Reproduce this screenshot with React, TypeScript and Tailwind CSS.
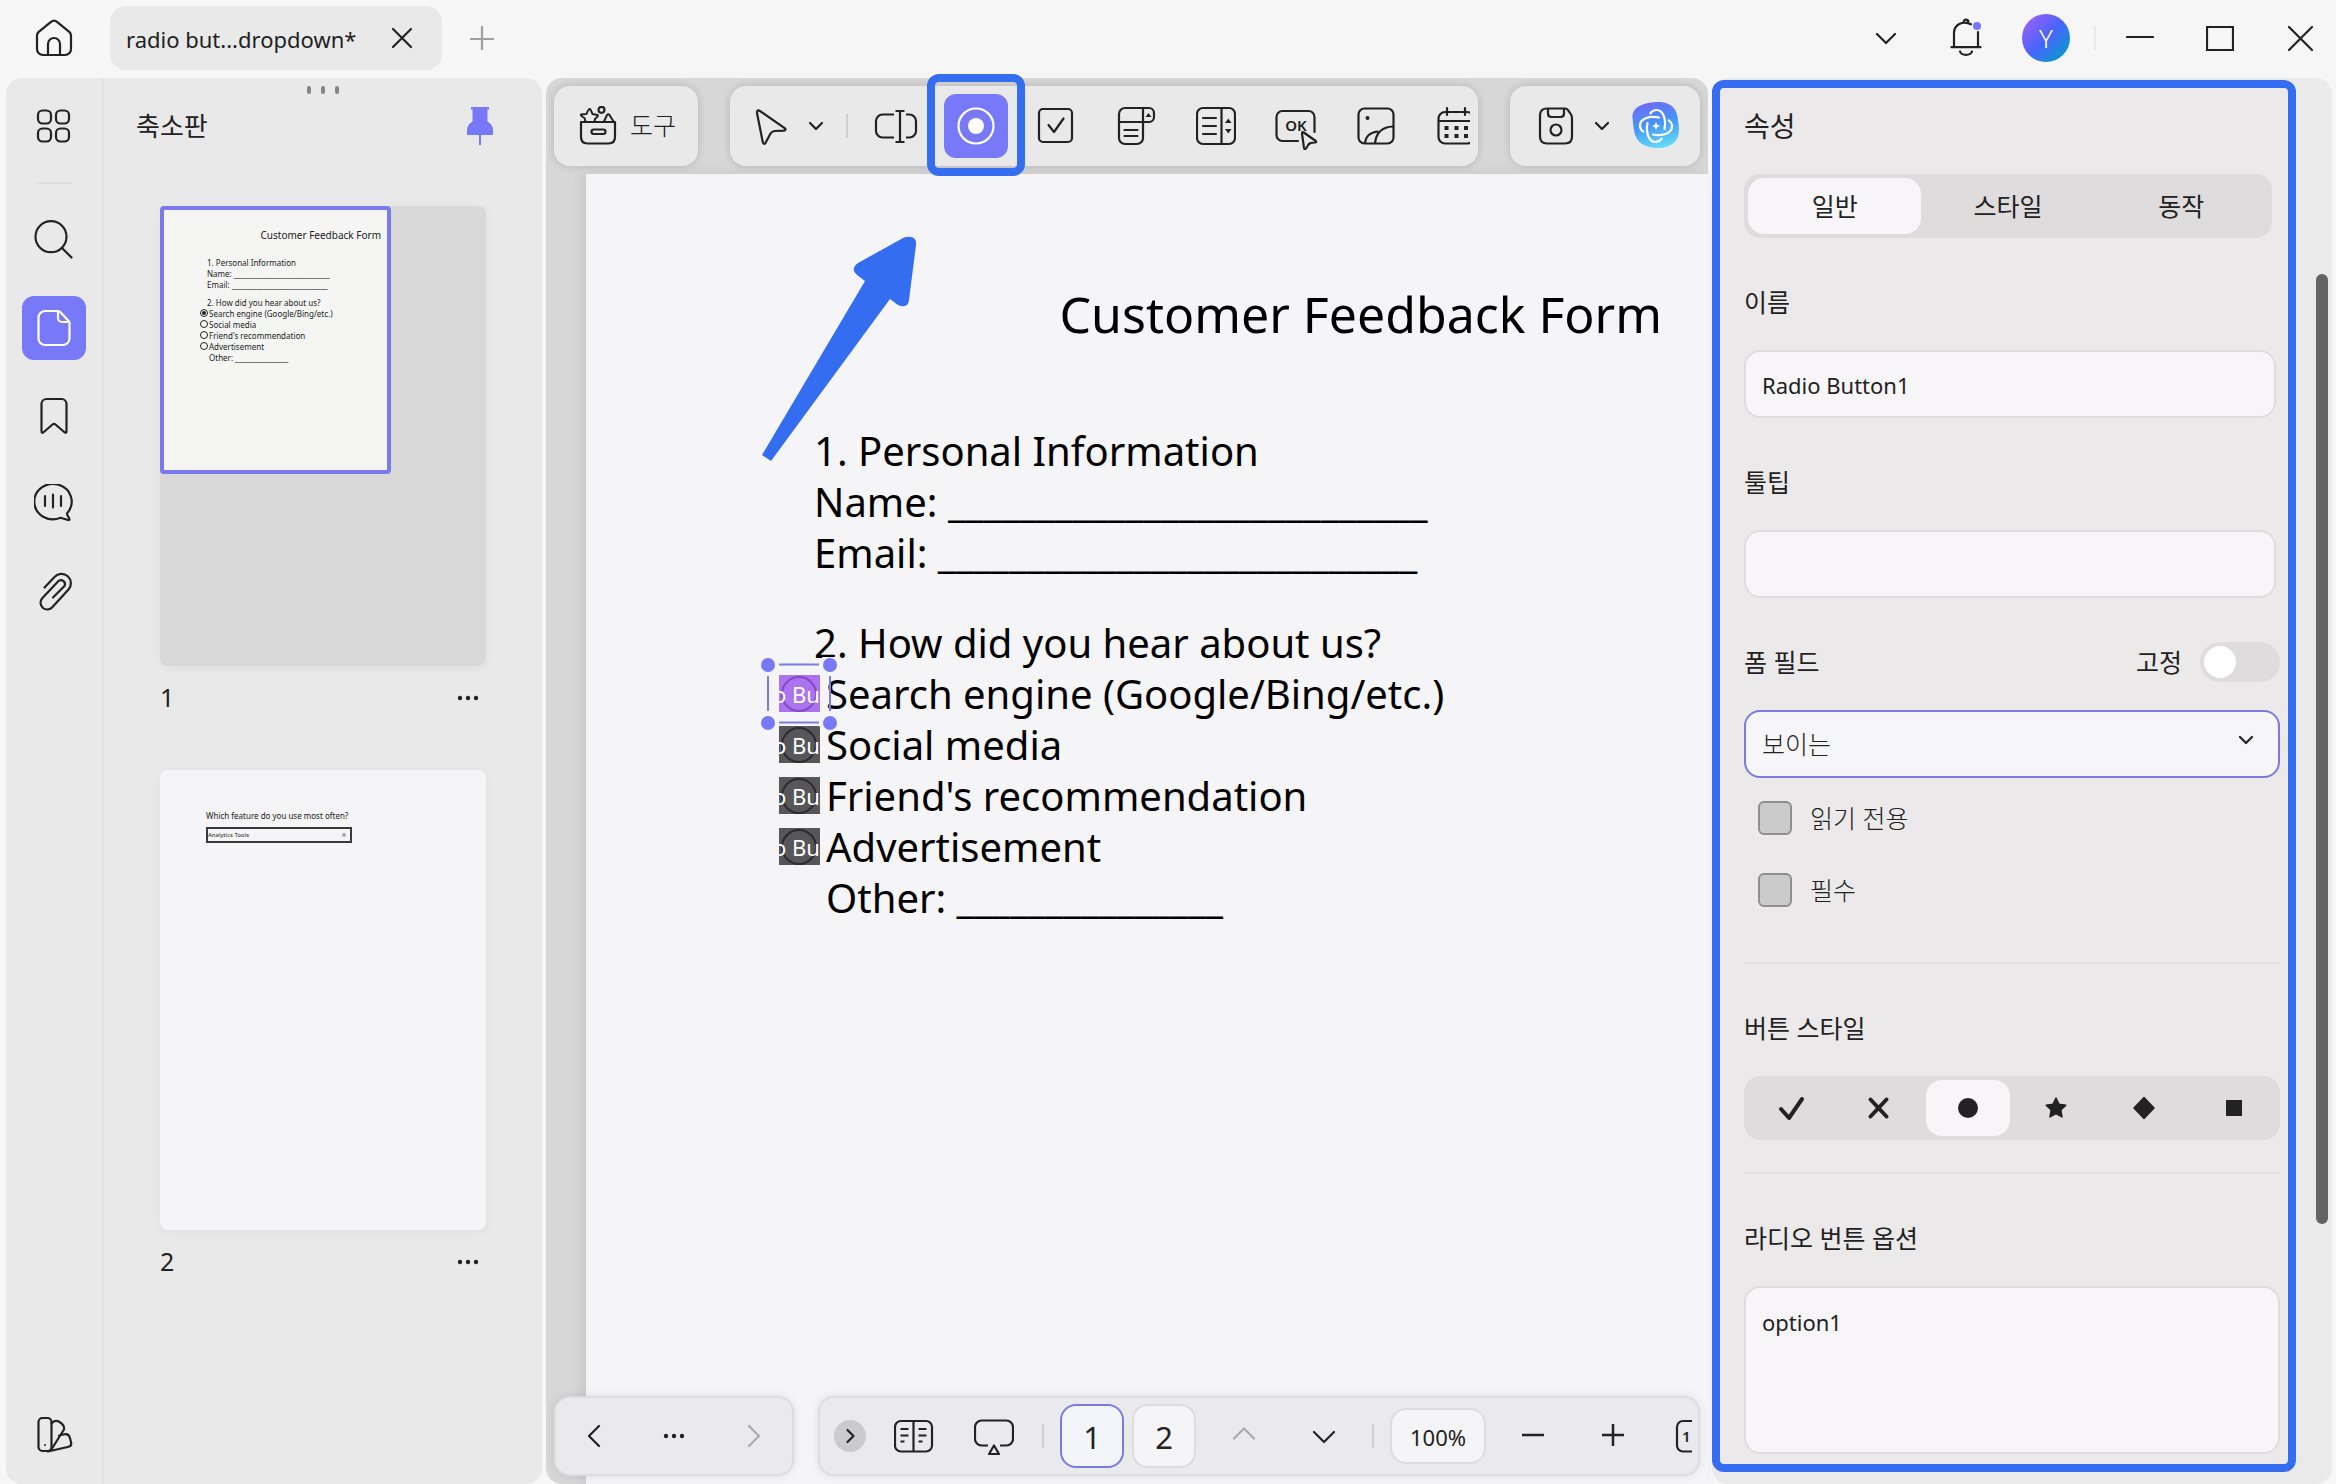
import React from "react";

const FONT = "font-['Noto_Sans','Noto_Sans_CJK_KR',sans-serif]";

type IconProps = { children: React.ReactNode; className?: string; w?: number; h?: number };

function Icon({ children, className = "", w = 40, h = 40 }: IconProps) {
  return (
    <svg
      width={w}
      height={h}
      viewBox={`0 0 ${w} ${h}`}
      fill="none"
      stroke="currentColor"
      strokeWidth="2.2"
      strokeLinecap="round"
      strokeLinejoin="round"
      className={`shrink-0 ${className}`}
      aria-hidden="true"
    >
      {children}
    </svg>
  );
}

function Tool({ label, children, className = "" }: { label: string; children: React.ReactNode; className?: string }) {
  return (
    <button aria-label={label} className={`relative flex h-16 w-16 shrink-0 items-center justify-center rounded-xl ${className}`}>
      {children}
    </button>
  );
}

const Dots = () => (
  <Icon w={24} h={8}>
    <g fill="currentColor" stroke="none">
      <circle cx="4" cy="4" r="2.2" />
      <circle cx="12" cy="4" r="2.2" />
      <circle cx="20" cy="4" r="2.2" />
    </g>
  </Icon>
);

const SmallChevron = () => (
  <Icon w={20} h={20}>
    <path d="M4 7l6 6 6-6" />
  </Icon>
);

function Header() {
  return (
    <header className="flex h-[78px] shrink-0 items-center pb-0.5 pl-[22px] pr-1">
      <Tool label="Home">
        <Icon>
          <path d="M3 17.5c0-1.5.6-2.6 1.7-3.6L17 3.8c1.8-1.5 4.2-1.5 6 0l12.3 10.1c1.1 1 1.7 2.1 1.7 3.6V31a6 6 0 0 1-6 6H9a6 6 0 0 1-6-6zM14 37V26a6 6 0 0 1 12 0v11" />
        </Icon>
      </Tool>
      <div className="ml-6 flex h-16 w-[332px] items-center justify-between rounded-2xl bg-[#e9e9e9] pl-4 pr-7">
        <span className="whitespace-nowrap pt-0.5 text-[22px]">radio but...dropdown*</span>
        <button aria-label="Close tab">
          <Icon w={24} h={24}>
            <path d="M3 3l18 18M21 3L3 21" />
          </Icon>
        </button>
      </div>
      <Tool label="New tab" className="ml-2 text-[#a0a0a0]">
        <Icon w={24} h={24}>
          <path d="M12 1v23M0 13h24" />
        </Icon>
      </Tool>
      <div className="ml-auto flex items-center">
        <Tool label="More">
          <Icon w={24} h={24}>
            <path d="M3 8l9 9 9-9" />
          </Icon>
        </Tool>
        <Tool label="Notifications" className="ml-4">
          <Icon>
            <path d="M17.5 5c0-4.5 5-4.5 5 0M25 6.3C16.5 2 8 7 8 15v14M32 14v15M5.500 29.200h29M14 33.500c1.500 4.500 10.500 4.500 12 0" />
            <circle cx="31" cy="8" r="4" fill="#7879f9" stroke="none" />
          </Icon>
        </Tool>
        <button className="ml-6 flex h-12 w-12 items-center justify-center rounded-full bg-linear-[135deg,#9a63f5_8%,#4a63ff_50%,#00a3c4_95%] text-[26px] font-light text-white">
          Y
        </button>
        <div className="ml-6 h-6 w-0.5 bg-[#e9e9e9]" />
        <Tool label="Minimize" className="ml-3">
          <Icon w={28} h={28}>
            <path d="M1 13h26" />
          </Icon>
        </Tool>
        <Tool label="Maximize" className="ml-4">
          <Icon w={28} h={28}>
            <path d="M1 3h26v23H1z" strokeLinejoin="miter" />
          </Icon>
        </Tool>
        <Tool label="Close" className="ml-4">
          <Icon w={28} h={28}>
            <path d="M3 3l23 23M26 3L3 26" />
          </Icon>
        </Tool>
      </div>
    </header>
  );
}

function Rail() {
  return (
    <nav className="flex w-[98px] shrink-0 flex-col items-center gap-6 border-r-2 border-[#e1e1e1] pb-[18px] pt-4">
      <Tool label="Apps">
        <Icon>
          <rect x="4" y="4.500" width="13" height="13" rx="4.500" />
          <rect x="22" y="4.500" width="13" height="13" rx="4.500" />
          <rect x="4" y="22.500" width="13" height="13" rx="4.500" />
          <rect x="22" y="22.500" width="13" height="13" rx="4.500" />
        </Icon>
      </Tool>
      <div className="h-0.5 w-9 bg-[#dfdfdf]" />
      <Tool label="Search">
        <Icon>
          <circle cx="17" cy="16.700" r="15.500" />
          <path d="M28 28l9.500 9.500" />
        </Icon>
      </Tool>
      <Tool label="Thumbnails" className="bg-[#7879f9] text-white">
        <Icon>
          <path d="M24 3H11a6.500 6.500 0 0 0-6.500 6.500v21A6.500 6.500 0 0 0 11 37h18a6.500 6.500 0 0 0 6.500-6.500V14L26.500 4.200Q25.500 3 24 3v7a4 4 0 0 0 4 4h7.500" />
        </Icon>
      </Tool>
      <Tool label="Bookmarks">
        <Icon>
          <path d="M7.500 8a5 5 0 0 1 5-5h15a5 5 0 0 1 5 5v27q0 3-2.300 1l-8.700-7.500q-1.500-1.300-3 0L9.800 36q-2.300 2-2.300-1z" />
        </Icon>
      </Tool>
      <Tool label="Comments">
        <Icon>
          <path d="M33.700 28.500A18.700 17.700 0 1 0 26.500 33.800L34 36q1.800.3 1.300-1.500l-2-3.500q-.6-1.200.4-2.500zM11 12v10M19 10.500v13M27 12v10" />
        </Icon>
      </Tool>
      <Tool label="Attachments">
        <Icon>
          <path d="M10.500 15.500L20.500 5A9 9 0 0 1 34.500 17.500L18.500 35A6.600 6.600 0 0 1 8 26.500L24.500 9A4 4 0 0 1 30.500 14L19 25.500" />
        </Icon>
      </Tool>
      <Tool label="Themes" className="mt-auto">
        <Icon>
          <rect x="4.500" y="4" width="13" height="33" rx="4" />
          <path d="M17.500 9.500q3.500-4.500 8-1.500 5.500 3.500 4.500 7.500L18 34.500M25 21.500l5.500-1.200q4-.8 5.300 3.200l1.300 5q.8 3.500-2.400 4.300L14 37.500" />
          <circle cx="11" cy="31" r="1" fill="currentColor" stroke="none" />
        </Icon>
      </Tool>
    </nav>
  );
}

function MiniRow({ children, checked }: { children: React.ReactNode; checked?: boolean }) {
  return (
    <div className="relative pl-[2px]">
      <span className="absolute -left-[7px] top-[1px] flex h-2 w-2 items-center justify-center rounded-full border border-[#222]">
        {checked && <span className="h-1 w-1 rounded-full bg-[#222]" />}
      </span>
      {children}
    </div>
  );
}

function ThumbFooter({ n }: { n: number }) {
  return (
    <div className="flex h-8 items-center justify-between pr-1.5 text-[25px]">
      <span>{n}</span>
      <button aria-label={`Page ${n} options`}>
        <Dots />
      </button>
    </div>
  );
}

function Thumbnails() {
  return (
    <aside className="flex min-w-0 flex-1 flex-col">
      <div className="flex justify-center gap-2.5 pt-2">
        <span className="h-2 w-1 rounded-sm bg-[#858585]" />
        <span className="h-2 w-1 rounded-sm bg-[#858585]" />
        <span className="h-2 w-1 rounded-sm bg-[#858585]" />
      </div>
      <div className="flex h-16 items-center justify-between pl-8 pr-[42px]">
        <h2 className="text-[26px]">축소판</h2>
        <button aria-label="Pin panel" className="text-[#7879f9]">
          <Icon w={40} h={40}>
            <path
              d="M11 1h18v2.500h-1.500v12q5.500 3 5.500 9V29H21v10h-2V29H7v-4.500q0-6 5.500-9v-12H11z"
              fill="currentColor"
              stroke="none"
            />
          </Icon>
        </button>
      </div>
      <div className="flex flex-col px-14 pt-12">
        <div className="h-[460px] rounded-lg bg-[#d9d8d9] shadow-[0_2px_10px_rgba(0,0,0,0.05)]">
          <div className="h-[268px] w-[231px] rounded border-4 border-[#7a7aee] bg-[#f5f5f4] text-[8px] leading-[11px] text-[#222]">
            <div className="pr-1.5 pt-[17px] text-right text-[10px] leading-4">Customer Feedback Form</div>
            <div className="whitespace-nowrap pl-[43px] pt-[14px]">
              <div>1. Personal Information</div>
              <div>Name: ___________________________</div>
              <div>Email: ___________________________</div>
              <div className="pt-[7px]">2. How did you hear about us?</div>
              <MiniRow checked>Search engine (Google/Bing/etc.)</MiniRow>
              <MiniRow>Social media</MiniRow>
              <MiniRow>Friend's recommendation</MiniRow>
              <MiniRow>Advertisement</MiniRow>
              <div className="pl-[2px]">Other: _______________</div>
            </div>
          </div>
        </div>
        <div className="mt-4">
          <ThumbFooter n={1} />
        </div>
        <div className="mt-14 h-[460px] rounded-lg bg-[#f5f4f6] pl-[46px] pt-[38px] text-[8px] leading-4 text-[#222] shadow-[0_2px_10px_rgba(0,0,0,0.05)]">
          <div>Which feature do you use most often?</div>
          <div className="mt-[3px] flex h-4 w-[146px] items-center justify-between border-2 border-[#3a383a] pr-1 text-[6px]">
            <span>Analytics Tools</span>
            <span className="h-1 w-1 rounded-full bg-[#aaa]" />
          </div>
        </div>
        <div className="mt-4">
          <ThumbFooter n={2} />
        </div>
      </div>
    </aside>
  );
}

const CARD = "flex h-20 items-center rounded-2xl bg-[#e9e9e9] shadow-[0_0_8px_rgba(0,0,0,0.16)]";

function Toolbar() {
  return (
    <div className="relative z-10 flex h-24 shrink-0 items-start justify-between px-2 pt-2">
      <button className={`${CARD} gap-3 pl-6 pr-[22px]`}>
        <Icon>
          <path d="M3 16h34v15q0 6.500-6.500 6.500h-21Q3 37.500 3 31z" />
          <rect x="13.500" y="23.500" width="14" height="4.500" rx="2.200" />
          <circle cx="23.500" cy="3.800" r="3" />
          <path d="M7.500 15.500L6.500 12Q2 9.500 3 8.500L8.500 8Q10.500 2.500 12 3q.5 0 2.500 5L19.500 9q1.500.6-2.500 4l-.5 2.500M26 15.500l3-6.500q1.200-1.500 2.500 0l4 6.500" strokeWidth="2" />
        </Icon>
        <span className="text-[25px] font-light">도구</span>
      </button>
      <div className={`${CARD} px-2`}>
        <Tool label="Select">
          <Icon>
            <path d="M7 7q-.2-4 3-2l25 17.300q1.500 1.600-1 2.300l-9.500.4q-2.500.3-4 2.500l-5 9.500q-1.800 2-2.700-.8z" />
          </Icon>
        </Tool>
        <button aria-label="Select options" className="flex w-7 justify-center">
          <SmallChevron />
        </button>
        <div className="mx-4 h-6 w-0.5 bg-[#cfcfcf]" />
        <div className="flex gap-4">
          <Tool label="Text field">
            <Icon w={44}>
              <path d="M20 8.500H8.500a6.500 6.500 0 0 0-6.500 6.500v10a6.500 6.500 0 0 0 6.500 6.500H20M32 8.500h3.500a6.500 6.500 0 0 1 6.500 6.500v10a6.500 6.500 0 0 1-6.500 6.500H32M26 5v31M21.500 5h9M21.500 36h9" strokeLinecap="butt" />
            </Icon>
          </Tool>
          <Tool label="Radio button" className="bg-[#7879f9] text-white">
            <Icon>
              <circle cx="20" cy="20" r="17.500" />
              <circle cx="20" cy="20" r="8" fill="currentColor" stroke="none" />
            </Icon>
            <span className="pointer-events-none absolute -inset-x-[17px] -bottom-[18px] -top-5 rounded-xl border-8 border-[#346df0]" />
          </Tool>
          <Tool label="Check box">
            <Icon>
              <rect x="3" y="3" width="33" height="33" rx="4" />
              <path d="M12.500 19l5.500 7 9.500-13.500" />
            </Icon>
          </Tool>
          <Tool label="Combo box">
            <Icon>
              <path d="M27 16H3V8a6 6 0 0 1 6-6h24a5 5 0 0 1 5 5v4a5 5 0 0 1-5 5h-6V2M3 16v16a6 6 0 0 0 6 6h12a6 6 0 0 0 6-6V16M8.500 24h13M8.500 30h13" />
              <path d="M29.500 11h6l-3-4z" fill="currentColor" stroke="none" />
            </Icon>
          </Tool>
          <Tool label="List box">
            <Icon>
              <rect x="1" y="2" width="38" height="36" rx="6" />
              <path d="M25.500 2v36M7 12h13M7 20h13M7 28h13" />
              <path d="M29 17h6.500l-3.200-4.500zM29 23h6.500l-3.200 4.500z" fill="currentColor" stroke="none" />
            </Icon>
          </Tool>
          <Tool label="Push button">
            <Icon w={44} h={48}>
              <path d="M24 39H8.500A6 6 0 0 1 2.500 33V15a6 6 0 0 1 6-6h26a6 6 0 0 1 6 6v15" />
              <text x="22" y="28.500" textAnchor="middle" fontSize="15" fontWeight="600" fill="currentColor" stroke="none">
                OK
              </text>
              <path d="M28 31.500q0-2 1.800-1l12 8.500q1 1.200-.8 1.500l-4.500.5-2 1.500-2.500 4q-1.500 1.500-2-.5z" fill="#e9e9e9" />
            </Icon>
          </Tool>
          <Tool label="Image">
            <Icon>
              <rect x="2.500" y="2.500" width="35" height="35" rx="6" />
              <path d="M9 37q1-10 12.500-11.500M19 37q2-16 18-16.500" />
              <circle cx="11.500" cy="12" r="2" fill="currentColor" stroke="none" />
            </Icon>
          </Tool>
          <button aria-label="Date" className="flex h-16 w-[46px] shrink-0 items-center overflow-hidden pl-3">
            <Icon>
              <path d="M9 6h22a6.500 6.500 0 0 1 6.500 6.500V31a6.500 6.500 0 0 1-6.500 6.500H9A6.500 6.500 0 0 1 2.500 31V12.500A6.500 6.500 0 0 1 9 6zM2.500 15h35M11 2v7M29 2v7" />
              <path d="M8.500 20h4v4h-4zM18.500 20h4v4h-4zM28 20h4v4h-4zM8.500 28h4v4h-4zM18.500 28h4v4h-4zM28 28h4v4h-4z" fill="currentColor" stroke="none" />
            </Icon>
          </button>
        </div>
      </div>
      <div className={`${CARD} pl-3.5 pr-3`}>
        <Tool label="Save">
          <Icon>
            <path d="M11 2.500h18q2 0 3.200 1.800L35 8.500q1 1.600 1 3.500v18.500q0 7-7 7H11q-7 0-7-7v-21q0-7 7-7z" />
            <path d="M12 3v4.500q0 3.500 3.500 3.500h9q3.500 0 3.500-3.500V3" />
            <circle cx="20" cy="24" r="5.500" />
          </Icon>
        </Tool>
        <button aria-label="Save options" className="mr-2 flex w-7 justify-center">
          <SmallChevron />
        </button>
        <Tool label="AI assistant">
          <Icon w={52} h={52}>
            <defs>
              <linearGradient id="ai" x1="0.300" y1="0" x2="0.550" y2="1">
                <stop offset="0" stopColor="#6f6af8" />
                <stop offset="0.500" stopColor="#4596fb" />
                <stop offset="1" stopColor="#62dcf4" />
              </linearGradient>
            </defs>
            <path d="M26 2C38 1 46 6 47.500 17 50 30 50 38 43 43.500 36 49 22 50 12 44 3 38 4 28 2.500 18 1.500 7 14 2.500 26 2z" fill="url(#ai)" stroke="none" />
            <g stroke="#fff" strokeWidth="2.200">
              <path id="arc" d="M20.300 13.300Q22.500 10 26.500 10C33 10 36.500 19 34.500 29" />
              <path transform="rotate(90 26 26)" d="M20.300 13.300Q22.500 10 26.500 10C33 10 36.500 19 34.500 29" />
              <path transform="rotate(180 26 26)" d="M20.300 13.300Q22.500 10 26.500 10C33 10 36.500 19 34.500 29" />
              <path transform="rotate(270 26 26)" d="M20.300 13.300Q22.500 10 26.500 10C33 10 36.500 19 34.500 29" />
            </g>
            <path d="M26 22l1.200 2.800 2.800 1.200-2.800 1.200L26 30l-1.200-2.800L22 26l2.800-1.200z" fill="#fff" stroke="none" />
          </Icon>
        </Tool>
      </div>
    </div>
  );
}

function RadioField({ selected }: { selected?: boolean }) {
  return (
    <span
      className={`absolute -left-[47px] top-[7px] flex h-[37px] w-[41px] items-center justify-center ${
        selected ? "bg-[#ab74ee]" : "bg-[#575658]"
      }`}
    >
      <span className="absolute inset-0 flex items-center overflow-hidden">
        <span className={`absolute left-0.5 h-9 w-9 rounded-full border-2 ${selected ? "border-[#8347c8]" : "border-[#2c2b2d]"}`} />
        <span className="relative -ml-1.5 shrink-0 whitespace-nowrap text-[22px] leading-8 text-white">o But</span>
      </span>
      {selected && (
        <svg width="78" height="74" viewBox="0 0 78 74" className="absolute -left-[19px] -top-[18px] z-10 max-w-none" aria-hidden="true">
          <g fill="#f5f4f6">
            <circle cx="8" cy="8" r="11" />
            <circle cx="70" cy="8" r="11" />
            <circle cx="8" cy="66" r="11" />
            <circle cx="70" cy="66" r="11" />
          </g>
          <path d="M19 7.500h40M19 65.500h40M8 19v35M70 19v35" stroke="#7b7de2" strokeWidth="2" />
          <g fill="#7879f9">
            <circle cx="8" cy="8" r="7" />
            <circle cx="70" cy="8" r="7" />
            <circle cx="8" cy="66" r="7" />
            <circle cx="70" cy="66" r="7" />
          </g>
        </svg>
      )}
    </span>
  );
}

function OptionRow({ children, selected }: { children: React.ReactNode; selected?: boolean }) {
  return (
    <div className={`relative ml-3 w-fit ${selected ? "z-10" : ""}`}>
      <RadioField selected={selected} />
      {children}
    </div>
  );
}

function Page() {
  return (
    <article className="relative ml-10 flex-1 bg-[#f5f4f6] text-black shadow-[-4px_0_12px_rgba(0,0,0,0.08)]">
      <h1 className="pr-[46px] pt-[104px] text-right text-[50px] leading-[72px]">Customer Feedback Form</h1>
      <div className="whitespace-nowrap pl-[228px] pt-[75px] text-[40px] leading-[51px]">
        <div>1. Personal Information</div>
        <div>Name: ___________________________</div>
        <div>Email: ___________________________</div>
        <div className="mt-[39px]">2. How did you hear about us?</div>
        <OptionRow selected>Search engine (Google/Bing/etc.)</OptionRow>
        <OptionRow>Social media</OptionRow>
        <OptionRow>Friend's recommendation</OptionRow>
        <OptionRow>Advertisement</OptionRow>
        <div className="ml-3">Other: _______________</div>
      </div>
      <svg width="156" height="226" viewBox="0 0 156 226" className="absolute left-[175px] top-[62px]" aria-hidden="true">
        <path
          d="M1 219L104 45 96 39Q89 33 97 27L143 1.500Q156-2 155 9L148 64Q147 73 137 69L129 63 10 225z"
          fill="#346df0"
        />
      </svg>
    </article>
  );
}

function BottomBar() {
  const card = "flex h-20 items-center rounded-2xl border-2 border-[#dedcdf] bg-[#eae9eb] shadow-[0_0_8px_rgba(0,0,0,0.1)]";
  return (
    <div className="absolute inset-x-2 bottom-2 flex justify-between">
      <div className={`${card} w-60 justify-around`}>
        <Tool label="Previous view">
          <Icon w={24} h={24}>
            <path d="M16 2L6 12l10 10" />
          </Icon>
        </Tool>
        <Tool label="View history">
          <Dots />
        </Tool>
        <Tool label="Next view" className="text-[#aaaaaa]">
          <Icon w={24} h={24}>
            <path d="M8 2l10 10L8 22" />
          </Icon>
        </Tool>
      </div>
      <div className={`${card} gap-4 pl-3.5 pr-1.5`}>
        <button aria-label="Expand" className="flex h-8 w-8 items-center justify-center rounded-full bg-[#cbcacc]">
          <Icon w={20} h={20}>
            <path d="M7.500 4l6 6-6 6" />
          </Icon>
        </button>
        <Tool label="Reading view">
          <Icon>
            <rect x="1" y="5" width="37" height="30.500" rx="6" />
            <path d="M19.500 5v30.500M6.500 13h8M6.500 19.500h8M6.500 25.500h4M24.500 13h8M24.500 19.500h8M24.500 25.500h4" strokeLinecap="butt" />
          </Icon>
        </Tool>
        <Tool label="Presentation">
          <Icon>
            <path d="M14 29.500H7.500a6.500 6.500 0 0 1-6.500-6.500V11a6.500 6.500 0 0 1 6.500-6.500h25A6.500 6.500 0 0 1 39 11v12a6.500 6.500 0 0 1-6.500 6.500H26" strokeLinecap="butt" />
            <path d="M20 29.500l5 8.500H15z" />
          </Icon>
        </Tool>
        <div className="h-6 w-0.5 bg-[#cfcfcf]" />
        <div className="flex gap-2 text-[31px]">
          <button className="h-16 w-16 rounded-2xl border-2 border-[#7b7bdf] bg-[#f4f5fa] pt-0.5">1</button>
          <button className="h-16 w-16 rounded-2xl border-2 border-[#dedcdf] bg-[#f5f4f6] pt-0.5">2</button>
        </div>
        <Tool label="Previous page" className="text-[#aaaaaa]">
          <Icon w={24} h={24}>
            <path d="M2 14.500l10-10 10 10" />
          </Icon>
        </Tool>
        <Tool label="Next page">
          <Icon w={24} h={24}>
            <path d="M2 8l10 10L22 8" />
          </Icon>
        </Tool>
        <div className="h-6 w-0.5 bg-[#cfcfcf]" />
        <button className="h-14 w-24 rounded-2xl border-2 border-[#dedcdf] bg-[#f5f4f6] pt-0.5 text-[22px]">100%</button>
        <Tool label="Zoom out">
          <Icon w={24} h={24}>
            <path d="M0 11h22" strokeLinecap="butt" strokeWidth="2.500" />
          </Icon>
        </Tool>
        <Tool label="Zoom in">
          <Icon w={24} h={24}>
            <path d="M0 11h22M11 0v22" strokeLinecap="butt" strokeWidth="2.500" />
          </Icon>
        </Tool>
        <button aria-label="Actual size" className="flex h-16 w-[30px] shrink-0 items-center overflow-hidden pl-3">
          <Icon>
            <rect x="3" y="5" width="34" height="30.500" rx="6" />
            <text x="8" y="26" fontSize="15" fontWeight="600" fill="currentColor" stroke="none">
              1
            </text>
          </Icon>
        </button>
      </div>
    </div>
  );
}

function CheckRow({ label }: { label: string }) {
  return (
    <label className="flex items-center gap-[18px] pl-3.5 text-[25px] leading-9 font-light">
      <input type="checkbox" className="h-[34px] w-[34px] appearance-none rounded-md border-2 border-[#8f8e90] bg-[#cccbcc]" />
      {label}
    </label>
  );
}

const MARKS: { name: string; shape: React.ReactNode }[] = [
  { name: "Check", shape: <path d="M3 15l8 9L24 5" strokeWidth="4" /> },
  { name: "Cross", shape: <path d="M4.500 5.500l16 17M20.500 5.500l-16 17" strokeWidth="4" /> },
  { name: "Circle", shape: <circle cx="14" cy="14" r="10" fill="currentColor" stroke="none" /> },
  {
    name: "Star",
    shape: <path d="M14 4l3 6.300 6.800.9-5 4.800 1.200 6.900L14 19.700l-6 3.200L9.200 16l-5-4.800 6.800-.9z" fill="currentColor" strokeWidth="1.500" />,
  },
  { name: "Diamond", shape: <path d="M14 3.500L24 14 14 24.500 4 14z" fill="currentColor" strokeWidth="1.500" /> },
  { name: "Square", shape: <path d="M8 6h16v16H8z" fill="currentColor" stroke="none" /> },
];

function Properties() {
  const field = "block rounded-2xl border-2 border-[#dedcdd] bg-[#f7f5f7] px-4 text-[22px] outline-none";
  return (
    <aside className="flex w-[620px] shrink-0 rounded-2xl bg-[#eaeaea]">
      <div className="mb-3 mt-0.5 flex w-[584px] flex-col overflow-hidden rounded-xl border-8 border-[#346df0] bg-[#ebe9ea] pl-6 pr-2 text-[25px] leading-9">
        <h2 className="pt-5 text-[28px]">속성</h2>
        <div className="mr-2 mt-[30px] grid h-16 shrink-0 grid-cols-3 rounded-2xl bg-[#dedcdd] p-1" role="tablist">
          <button role="tab" aria-selected="true" className="rounded-2xl bg-[#f7f5f7]">
            일반
          </button>
          <button role="tab" aria-selected="false">
            스타일
          </button>
          <button role="tab" aria-selected="false">
            동작
          </button>
        </div>
        <label htmlFor="name" className="mt-[46px] block">
          이름
        </label>
        <input id="name" defaultValue="Radio Button1" className={`${field} mr-1 mt-[30px] h-[68px] shrink-0 pt-0.5`} />
        <label htmlFor="tip" className="mt-[46px] block">
          툴팁
        </label>
        <input id="tip" className={`${field} mr-1 mt-[30px] h-[68px] shrink-0`} />
        <div className="mt-11 flex items-center">
          <label htmlFor="field">폼 필드</label>
          <label className="ml-auto flex items-center gap-[18px]">
            고정
            <span className="relative flex h-10">
              <input type="checkbox" role="switch" className="h-10 w-20 appearance-none rounded-full bg-[#dedcdd]" />
              <span className="pointer-events-none absolute left-1 top-1 h-8 w-8 rounded-full bg-white" />
            </span>
          </label>
        </div>
        <div className="relative mt-7">
          <select
            id="field"
            className="block h-[68px] w-full appearance-none rounded-2xl border-2 border-[#7b7bdf] bg-[#f6f5f8] px-4 font-light outline-none"
          >
            <option>보이는</option>
          </select>
          <span className="pointer-events-none absolute right-6 top-5">
            <SmallChevron />
          </span>
        </div>
        <div className="mt-[22px] flex flex-col gap-9 pb-[54px]">
          <CheckRow label="읽기 전용" />
          <CheckRow label="필수" />
        </div>
        <hr className="border-t-2 border-[#e2e0e1]" />
        <h3 className="mt-[46px]">버튼 스타일</h3>
        <div className="mt-[30px] grid h-16 shrink-0 grid-cols-6 rounded-2xl bg-[#dedcdd] p-1">
          {MARKS.map((m, i) => (
            <button
              key={m.name}
              aria-label={m.name}
              aria-pressed={i === 2}
              className={`mx-0.5 flex items-center justify-center rounded-2xl ${i === 2 ? "bg-[#f7f5f7]" : ""}`}
            >
              <Icon w={28} h={28}>
                {m.shape}
              </Icon>
            </button>
          ))}
        </div>
        <hr className="mt-8 border-t-2 border-[#e2e0e1]" />
        <label htmlFor="options" className="mt-[46px] block">
          라디오 번튼 옵션
        </label>
        <textarea id="options" defaultValue="option1" className={`${field} mt-[30px] h-[168px] shrink-0 resize-none pt-4`} />
      </div>
      <div className="ml-auto mr-1 mt-[196px] h-[950px] w-3 rounded-full bg-[#636363]" />
    </aside>
  );
}

export default function App() {
  return (
    <div className={`flex h-screen flex-col overflow-hidden bg-[#f6f6f6] text-[#222] ${FONT}`}>
      <Header />
      <div className="flex min-h-0 flex-1 gap-1 px-1.5 pr-1">
        <div className="flex w-[536px] shrink-0 rounded-2xl bg-[#e9e9ea]">
          <Rail />
          <Thumbnails />
        </div>
        <main className="relative flex min-w-0 flex-1 flex-col rounded-2xl bg-[#d7d7d7]">
          <Toolbar />
          <Page />
          <BottomBar />
        </main>
        <Properties />
      </div>
    </div>
  );
}
